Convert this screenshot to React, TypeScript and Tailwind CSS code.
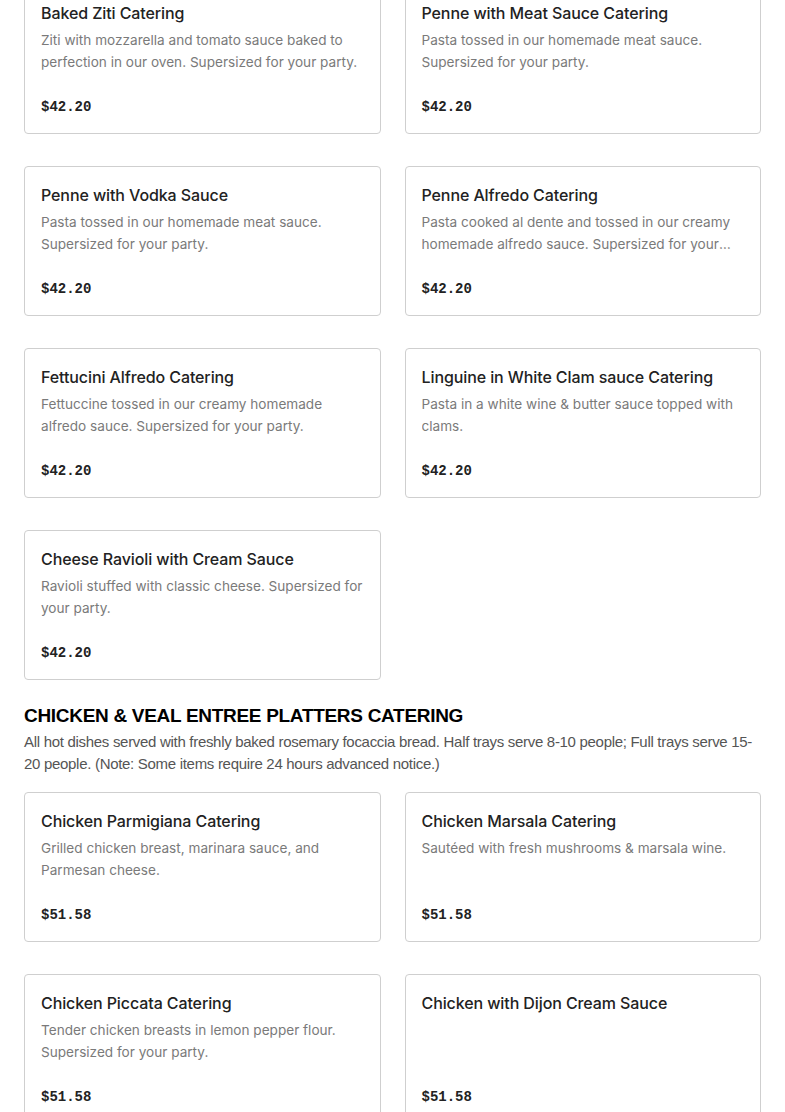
const pasta = [
  {
    name: "Baked Ziti Catering",
    desc: "Ziti with mozzarella and tomato sauce baked to perfection in our oven. Supersized for your party.",
    price: "$42.20",
  },
  {
    name: "Penne with Meat Sauce Catering",
    desc: "Pasta tossed in our homemade meat sauce. Supersized for your party.",
    price: "$42.20",
  },
  {
    name: "Penne with Vodka Sauce",
    desc: "Pasta tossed in our homemade meat sauce. Supersized for your party.",
    price: "$42.20",
  },
  {
    name: "Penne Alfredo Catering",
    desc: "Pasta cooked al dente and tossed in our creamy homemade alfredo sauce. Supersized for your party.",
    price: "$42.20",
  },
  {
    name: "Fettucini Alfredo Catering",
    desc: "Fettuccine tossed in our creamy homemade alfredo sauce. Supersized for your party.",
    price: "$42.20",
  },
  {
    name: "Linguine in White Clam sauce Catering",
    desc: "Pasta in a white wine & butter sauce topped with clams.",
    price: "$42.20",
  },
  {
    name: "Cheese Ravioli with Cream Sauce",
    desc: "Ravioli stuffed with classic cheese. Supersized for your party.",
    price: "$42.20",
  },
];

const chicken = [
  {
    name: "Chicken Parmigiana Catering",
    desc: "Grilled chicken breast, marinara sauce, and Parmesan cheese.",
    price: "$51.58",
  },
  {
    name: "Chicken Marsala Catering",
    desc: "Sautéed with fresh mushrooms & marsala wine.",
    price: "$51.58",
  },
  {
    name: "Chicken Piccata Catering",
    desc: "Tender chicken breasts in lemon pepper flour. Supersized for your party.",
    price: "$51.58",
  },
  { name: "Chicken with Dijon Cream Sauce", desc: "", price: "$51.58" },
];

type Item = { name: string; desc: string; price: string };

// descriptions longer than two lines get cut with an ellipsis, same as the live menu
function Card({ item }: { item: Item }) {
  return (
    <div className="flex h-[150px] flex-col rounded-[4px] border border-[#cfcfcf] bg-white px-4 pt-[16px] pb-[15px]">
      <p className="text-[16px] leading-6 font-medium text-[#222] [font-family:Inter,'Noto_Sans',sans-serif] tracking-[-0.1px]">
        {item.name}
      </p>
      {item.desc && (
        <p className="mt-[4px] line-clamp-2 text-[13.6px] leading-[22px] text-[#7a7a7a] [font-family:Inter,'Noto_Sans',sans-serif]">
          {item.desc}
        </p>
      )}
      <p className="mt-auto text-[14px] leading-[22px] font-bold text-[#222] [font-family:'Liberation_Mono',monospace]">
        {item.price}
      </p>
    </div>
  );
}

export default function App() {
  return (
    <div className="min-h-screen bg-white px-6">
      <div className="-mt-4 grid grid-cols-2 gap-x-6 gap-y-8">
        {pasta.map((p) => (
          <Card key={p.name} item={p} />
        ))}
      </div>

      <h2 className="mt-[24px] text-[19px] leading-6 font-black uppercase text-black [font-family:'Liberation_Sans',Arial,sans-serif] tracking-[-0.3px]">
        Chicken &amp; Veal Entree Platters Catering
      </h2>
      <p className="mt-[3px] text-[15px] leading-[22px] text-[#555] [font-family:'Liberation_Sans',Arial,sans-serif] tracking-[-0.3px]">
        All hot dishes served with freshly baked rosemary focaccia bread. Half trays serve 8-10 people; Full trays serve 15-20 people. (Note: Some items require 24 hours advanced notice.)
      </p>

      <div className="mt-[17px] grid grid-cols-2 gap-x-6 gap-y-8 pb-10">
        {chicken.map((p) => (
          <Card key={p.name} item={p} />
        ))}
      </div>
    </div>
  );
}
